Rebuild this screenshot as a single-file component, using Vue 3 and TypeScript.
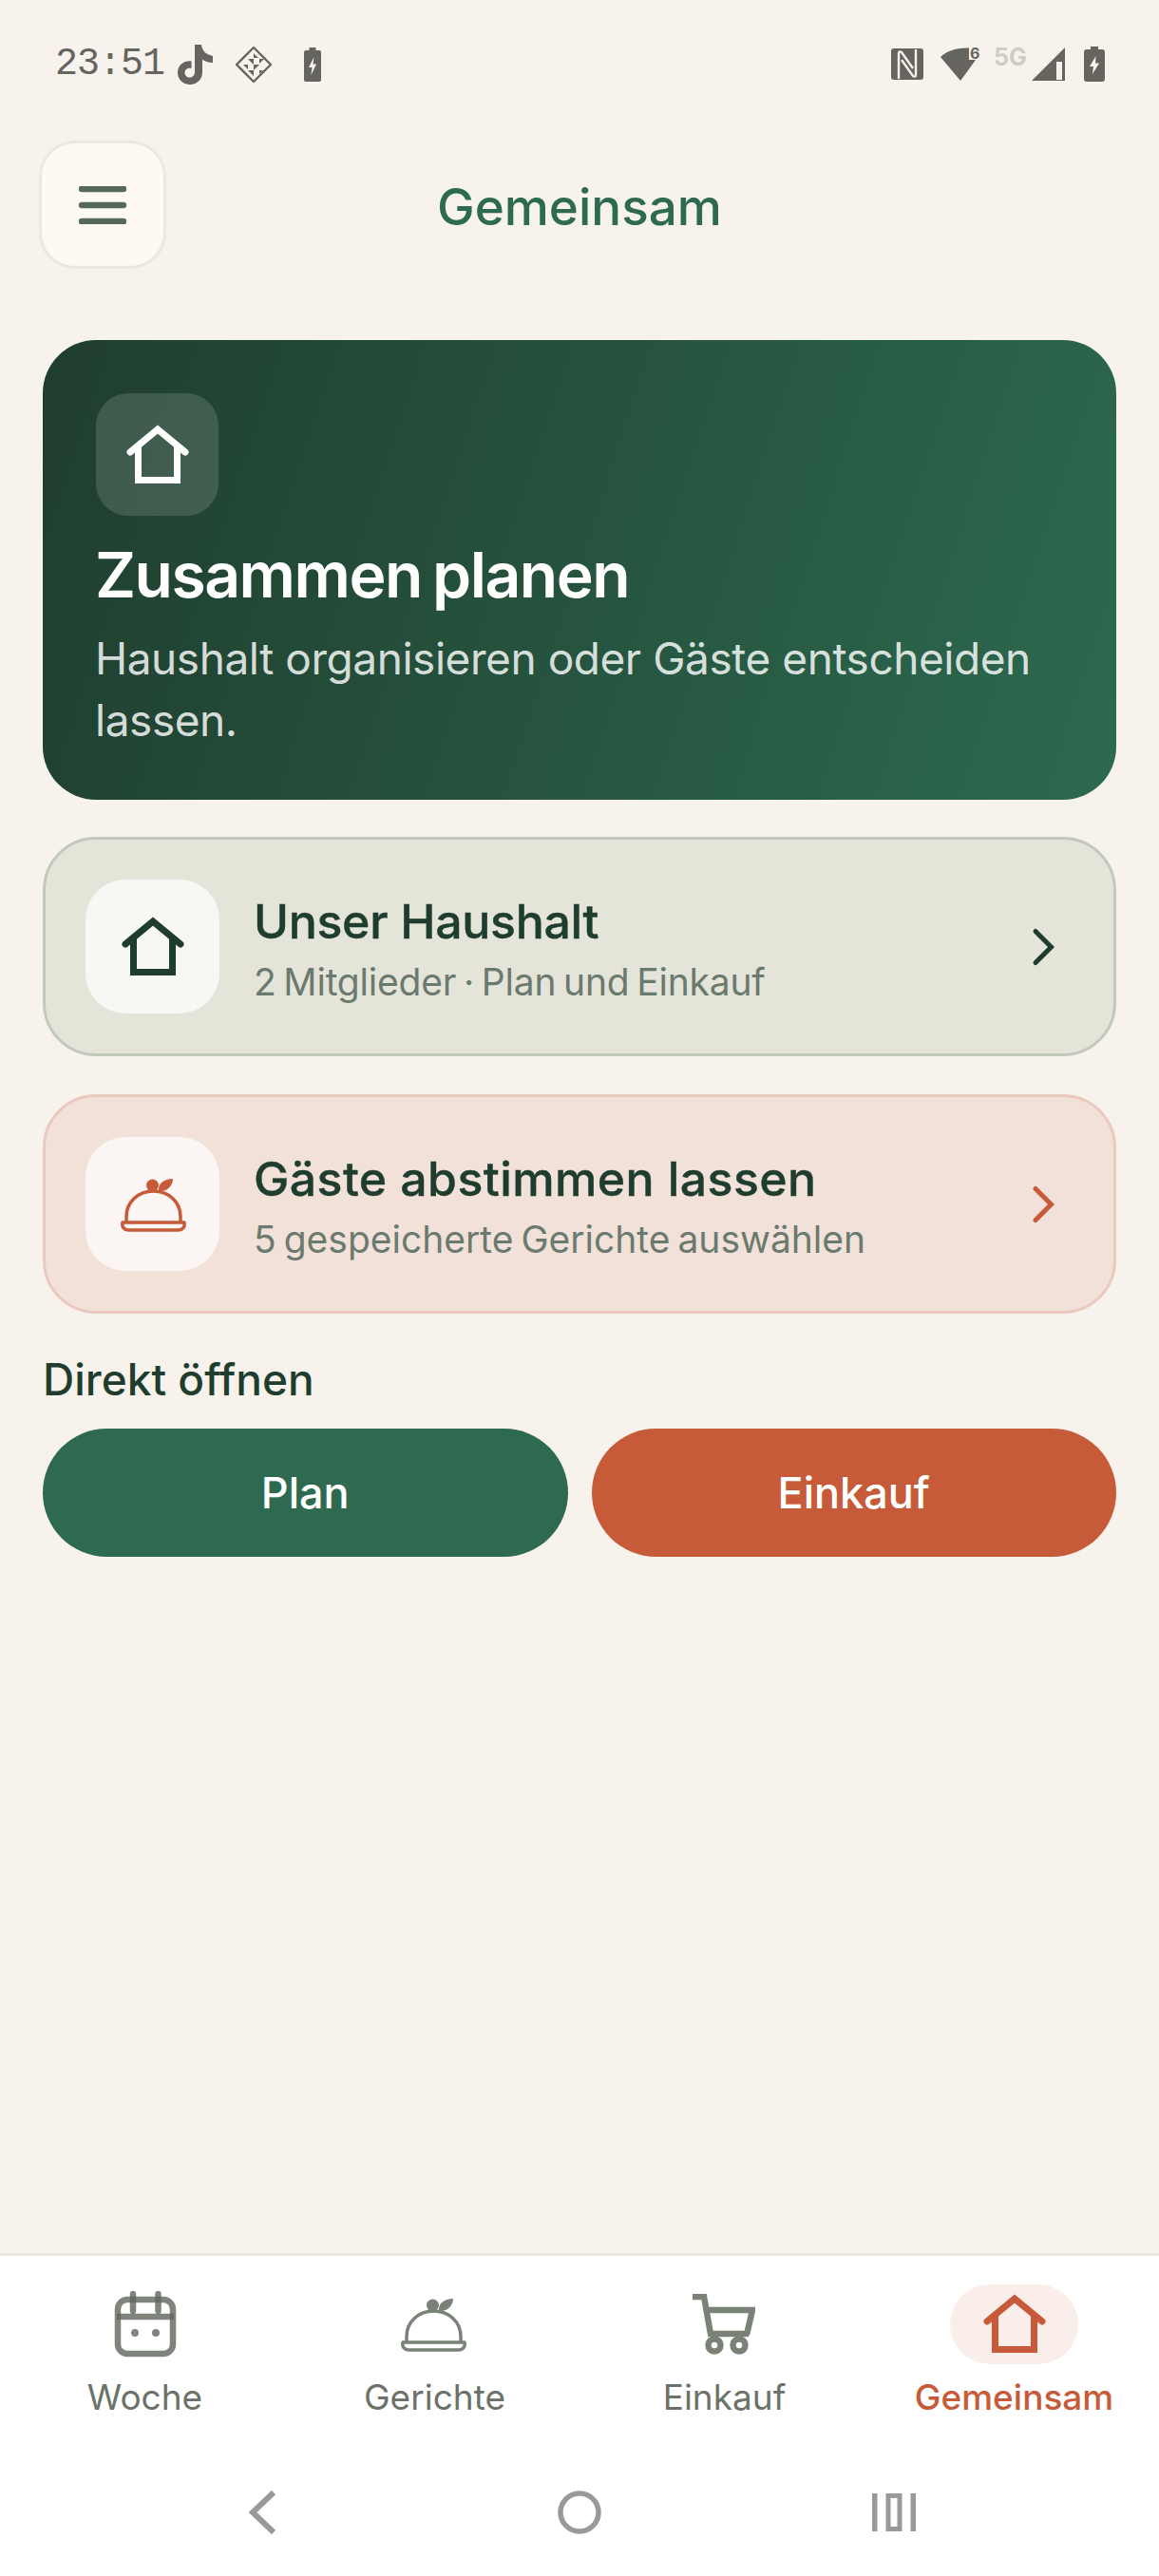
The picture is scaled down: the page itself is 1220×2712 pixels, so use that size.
<script setup lang="ts">
interface Card {
  title: string;
  sub: string;
  kind: "home" | "guest";
}

const cards: Card[] = [
  { title: "Unser Haushalt", sub: "2 Mitglieder · Plan und Einkauf", kind: "home" },
  { title: "Gäste abstimmen lassen", sub: "5 gespeicherte Gerichte auswählen", kind: "guest" },
];

const tabs = ["Woche", "Gerichte", "Einkauf", "Gemeinsam"];
</script>

<template>
  <div class="screen">
    <div class="status">
      <div class="status-left">
        <span class="time">23:51</span>
        <svg class="st-tiktok" width="37" height="42" viewBox="0 0 37 42"><path d="M18 0h7c.5 5 3.500 9.500 9 11l3 1v7c-4.500 0-8.500-1.500-11-3.500V29c0 7.500-5.500 13-13 13C6 42 0 37 0 29.500 0 21.500 7 16.500 14.500 17.500v7.500c-3.500-1-7 1-7 4.500 0 3 2.500 5 5 5 3 0 5.500-2 5.500-6z" fill="#65645f"/></svg>
        <svg class="st-diamond" width="40" height="40" viewBox="0 0 40 40">
          <path d="M20 2 38 20 20 38 2 20z" fill="none" stroke="#65645f" stroke-width="2.400" stroke-linejoin="round"/>
          <path d="M20 8l5 5h-5zM14 14h6v6zM26 14h5l-5 5zM20 20h6l-6 6zM9 20h5v5zM14 26l6 6v-6zM26 26h4l-4 4z" fill="#65645f"/>
        </svg>
        <svg class="st-batt" width="18" height="36" viewBox="0 0 18 36"><path d="M5.500 0h7v3H16a2 2 0 0 1 2 2v29a2 2 0 0 1-2 2H2a2 2 0 0 1-2-2V5a2 2 0 0 1 2-2h3.500z" fill="#65645f"/><path d="M10.500 10 5 21h3.500l-1 8L13 17.500H9.500z" fill="#f7f3ec"/></svg>
      </div>
      <div class="status-right">
        <svg width="34" height="33" viewBox="0 0 34 33"><rect width="34" height="33" rx="3" fill="#65645f"/><path d="M8 32V5c0-2 2-2 3-1l12 17M26 1v27c0 2-2 2-3 1L11 12" fill="none" stroke="#f7f3ec" stroke-width="2.400"/></svg>
        <svg class="st-wifi" width="42" height="36" viewBox="0 0 42 36"><path d="M0 11C6 5 16 1 30 1.500V14H37L21 36z" fill="#65645f"/><text x="31" y="13" class="wifi-six">6</text></svg>
        <span class="five-g">5G</span>
        <svg class="st-signal" width="35" height="35" viewBox="0 0 35 35"><path d="M35 0v35H0z" fill="#65645f"/><path d="M26 15h6v19h-6z" fill="#f7f3ec"/></svg>
        <svg class="st-batt2" width="22" height="37" viewBox="0 0 22 37"><path d="M7 0h8v3h4a3 3 0 0 1 3 3v28a3 3 0 0 1-3 3H3a3 3 0 0 1-3-3V6a3 3 0 0 1 3-3h4z" fill="#65645f"/><path d="M12.500 10 6 21h4l-1 8 7-11.500h-4z" fill="#f7f3ec"/></svg>
      </div>
    </div>

    <header class="topbar">
      <button class="menu-btn" aria-label="Menü">
        <svg width="50" height="40" viewBox="0 0 50 40"><path d="M3 3h44M3 20h44M3 37h44" stroke="#54695a" stroke-width="6.500" stroke-linecap="round"/></svg>
      </button>
      <h1 class="page-title">Gemeinsam</h1>
    </header>

    <main class="content">
      <section class="hero">
        <div class="hero-icon">
          <svg class="house" viewBox="0 0 70 70"><path d="M6 32 35 8l29 24M14.500 27v34.500h41V27" fill="none" stroke="currentColor" stroke-width="7" stroke-linecap="round"/></svg>
        </div>
        <h2 class="hero-title">Zusammen planen</h2>
        <p class="hero-sub">Haushalt organisieren oder Gäste entscheiden lassen.</p>
      </section>

      <a v-for="card in cards" :key="card.kind" class="card" :class="'card-' + card.kind">
        <div class="card-icon">
          <svg v-if="card.kind === 'home'" class="house" viewBox="0 0 70 70"><path d="M6 32 35 8l29 24M14.500 27v34.500h41V27" fill="none" stroke="currentColor" stroke-width="7" stroke-linecap="round"/></svg>
          <svg v-else class="dome" viewBox="0 0 70 70">
            <path d="M7 53V48C7 32 20 21 35.500 21S64 32 64 48v5" fill="none" stroke="currentColor" stroke-width="3.500"/>
            <path d="M3 54h65c1 5-2 8-6 8H9c-4 0-7-3-6-8z" fill="none" stroke="currentColor" stroke-width="3.500" stroke-linejoin="round"/>
            <circle cx="34.500" cy="15" r="6.500" fill="currentColor"/>
            <path d="M41 21c-1-8 6-13 15-13 0 7-6 14-15 13z" fill="currentColor"/>
          </svg>
        </div>
        <div class="card-text">
          <div class="card-title">{{ card.title }}</div>
          <div class="card-sub">{{ card.sub }}</div>
        </div>
        <svg class="chev" width="26" height="42" viewBox="0 0 26 42"><path d="M4 4.500l16.500 16.500L4 37.500" fill="none" stroke="currentColor" stroke-width="5" stroke-linecap="round"/></svg>
      </a>

      <h3 class="direct">Direkt öffnen</h3>
      <div class="actions">
        <button class="action action-plan">Plan</button>
        <button class="action action-shop">Einkauf</button>
      </div>
    </main>

    <nav class="tabs">
      <div v-for="(tab, i) in tabs" :key="tab" class="tab" :class="{ active: i === 3 }">
        <div class="tab-icon">
          <svg v-if="i === 0" width="66" height="70" viewBox="0 0 66 70">
            <g stroke="#5f665c" stroke-opacity=".8" fill="none" stroke-width="6.500">
              <rect x="4" y="9" width="58" height="57" rx="10"/>
              <path d="M3 27h60"/>
              <path d="M20 3v18M46.500 3v18" stroke-linecap="round"/>
            </g>
            <circle cx="22" cy="44" r="4" fill="#5f665c" fill-opacity=".8"/>
            <circle cx="44" cy="44" r="4" fill="#5f665c" fill-opacity=".8"/>
          </svg>
          <svg v-else-if="i === 1" class="dome dome-tab" viewBox="0 0 70 70">
            <path d="M7 53V48C7 32 20 21 35.500 21S64 32 64 48v5" fill="none" stroke="currentColor" stroke-width="3.500"/>
            <path d="M3 54h65c1 5-2 8-6 8H9c-4 0-7-3-6-8z" fill="none" stroke="currentColor" stroke-width="3.500" stroke-linejoin="round"/>
            <circle cx="34.500" cy="15" r="6.500" fill="currentColor"/>
            <path d="M41 21c-1-8 6-13 15-13 0 7-6 14-15 13z" fill="currentColor"/>
          </svg>
          <svg v-else-if="i === 2" class="cart-tab" width="70" height="66" viewBox="0 0 70 66">
            <g fill="none" stroke="currentColor" stroke-width="6.500">
              <path d="M4 3h12l7 39h40M18 17h49l-6 26"/>
              <circle cx="27" cy="54" r="6.500"/>
              <circle cx="53" cy="54" r="6.500"/>
            </g>
          </svg>
          <div v-else class="active-pill">
            <svg class="house" viewBox="0 0 70 70"><path d="M6 32 35 8l29 24M14.500 27v34.500h41V27" fill="none" stroke="currentColor" stroke-width="7" stroke-linecap="round"/></svg>
          </div>
        </div>
        <span class="tab-label">{{ tab }}</span>
      </div>
    </nav>

    <div class="sysnav">
      <svg width="30" height="46" viewBox="0 0 30 46"><path d="M27 2 5 23l22 21" fill="none" stroke="#999" stroke-width="6"/></svg>
      <svg width="46" height="46" viewBox="0 0 46 46"><circle cx="23" cy="23" r="20" fill="none" stroke="#999" stroke-width="5.500"/></svg>
      <svg width="46" height="40" viewBox="0 0 46 40"><path d="M0 0h5.500v40H0zM40.500 0H46v40h-5.500z" fill="#999"/><rect x="17" y="2.500" width="12" height="35" fill="none" stroke="#999" stroke-width="5"/></svg>
    </div>
  </div>
</template>

<style>
html,
body {
  margin: 0;
  background: #f7f3ec;
}
</style>

<style scoped>
.screen {
  width: 1220px;
  height: 2712px;
  display: flex;
  flex-direction: column;
  background: #f7f3ec;
  font-family: Inter, "Liberation Sans", sans-serif;
  color: #1f3d2e;
  overflow: hidden;
}

.status {
  height: 148px;
  flex: none;
  display: flex;
  justify-content: space-between;
  align-items: flex-start;
  padding: 47px 57px 0 58px;
  box-sizing: border-box;
}
.status-left,
.status-right {
  display: flex;
  align-items: center;
}
.time {
  font-family: "Liberation Mono", monospace;
  font-size: 40px;
  line-height: 42px;
  letter-spacing: -1px;
  color: #65645f;
  width: 129px;
}
.st-diamond {
  margin-left: 23px;
}
.st-batt {
  margin-left: 33px;
}
.status-right {
  height: 40px;
}
.st-wifi {
  margin-left: 18px;
  overflow: visible;
}
.wifi-six {
  font-family: Inter, sans-serif;
  font-size: 16px;
  font-weight: 700;
  fill: #65645f;
}
.five-g {
  font-family: Inter, sans-serif;
  font-weight: 700;
  font-size: 25px;
  line-height: 30px;
  color: #cfccc6;
  margin: -15px 0 0 14px;
  width: 33px;
}
.st-signal {
  margin-left: 7px;
}
.st-batt2 {
  margin-left: 20px;
}

.topbar {
  flex: none;
  height: 135px;
  position: relative;
  display: flex;
  align-items: center;
  justify-content: center;
}
.menu-btn {
  position: absolute;
  left: 41px;
  top: 0;
  width: 134px;
  height: 135px;
  box-sizing: border-box;
  border: 3px solid #ede8df;
  border-radius: 38px;
  background: #fef9f3;
  display: flex;
  align-items: center;
  justify-content: center;
  padding: 0;
}
.page-title {
  margin: 4px 0 0;
  font-size: 53px;
  font-weight: 500;
  color: #2d6a4f;
}

.content {
  flex: 1;
  padding: 75px 45px 0;
  display: flex;
  flex-direction: column;
}
.hero {
  height: 484px;
  box-sizing: border-box;
  padding: 56px 56px 0;
  border-radius: 56px;
  background: linear-gradient(108deg, #1f3d2e 0%, #2d6a4f 100%);
  color: #fff;
}
.hero-icon {
  width: 129px;
  height: 129px;
  border-radius: 34px;
  background: rgba(255, 255, 255, 0.14);
  display: flex;
  align-items: center;
  justify-content: center;
}
.house {
  width: 70px;
  height: 70px;
  display: block;
}
.dome {
  width: 70px;
  height: 70px;
  display: block;
}
.dome-tab {
  margin-left: -3px;
}
.cart-tab {
  margin: 2px 0 0 -6px;
}
.hero-title {
  margin: 22px 0 0 -1px;
  font-size: 66px;
  line-height: 80px;
  font-weight: 600;
  letter-spacing: -1.5px;
  word-spacing: -4px;
}
.hero-sub {
  margin: 16px 0 0 -1px;
  font-size: 46px;
  line-height: 65px;
  color: rgba(255, 255, 255, 0.82);
  letter-spacing: -0.45px;
}

.card {
  height: 231px;
  box-sizing: border-box;
  margin-top: 39px;
  border: 3px solid #c2c9bc;
  border-radius: 56px;
  background: #e4e4d9;
  display: flex;
  align-items: center;
  padding: 0 42px;
}
.card-guest {
  margin-top: 40px;
  border-color: #eac9bf;
  background: #f2e1d8;
}
.card-icon {
  width: 141px;
  height: 141px;
  flex: none;
  border-radius: 42px;
  background: rgba(255, 255, 255, 0.7);
  display: flex;
  align-items: center;
  justify-content: center;
  color: #1f3d2e;
}
.card-guest .card-icon {
  color: #c75b39;
}
.card-text {
  flex: 1;
  margin-left: 36px;
  padding-top: 6px;
}
.card-title {
  font-size: 50px;
  line-height: 60px;
  font-weight: 500;
  -webkit-text-stroke: 0.4px currentColor;
}
.card-home .card-title {
  letter-spacing: -0.3px;
}
.card-guest .card-title {
  letter-spacing: 0.4px;
}
.card-sub {
  margin-top: 9px;
  font-size: 39px;
  line-height: 50px;
  color: #6b7a6e;
  word-spacing: -3px;
}
.card-home .card-sub {
  letter-spacing: -0.2px;
}
.chev {
  color: #1f3d2e;
  margin-right: 18px;
}
.card-guest .chev {
  color: #c75b39;
}

.direct {
  margin: 41px 0 0;
  font-size: 46px;
  line-height: 56px;
  font-weight: 500;
}
.actions {
  margin-top: 24px;
  display: flex;
  gap: 25px;
}
.action {
  flex: 1;
  height: 135px;
  border: 0;
  border-radius: 68px;
  color: #fff;
  font-family: inherit;
  font-size: 45px;
  font-weight: 500;
}
.action-plan {
  background: #2d6a4f;
}
.action-shop {
  background: #c75b39;
}

.tabs {
  flex: none;
  height: 205px;
  box-sizing: border-box;
  background: #fff;
  border-top: 3px solid #ede8df;
  display: flex;
  padding-top: 30px;
}
.tab {
  flex: 1;
  display: flex;
  flex-direction: column;
  align-items: center;
  color: #7a8278;
}
.tab-icon {
  height: 84px;
  display: flex;
  align-items: center;
  justify-content: center;
}
.tab-label {
  margin-top: 12px;
  font-size: 37px;
  line-height: 46px;
  color: #6b7268;
}
.tab.active .tab-label {
  color: #c75b39;
  font-weight: 500;
}
.active-pill {
  width: 135px;
  height: 84px;
  border-radius: 42px;
  background: #faeeea;
  color: #c75b39;
  display: flex;
  align-items: center;
  justify-content: center;
}

.sysnav {
  flex: none;
  height: 135px;
  box-sizing: border-box;
  padding-left: 5px;
  background: #fff;
  display: flex;
  align-items: center;
  justify-content: center;
}
.sysnav svg:nth-child(1) {
  margin-right: 296px;
}
.sysnav svg:nth-child(3) {
  margin-left: 285px;
}
</style>
